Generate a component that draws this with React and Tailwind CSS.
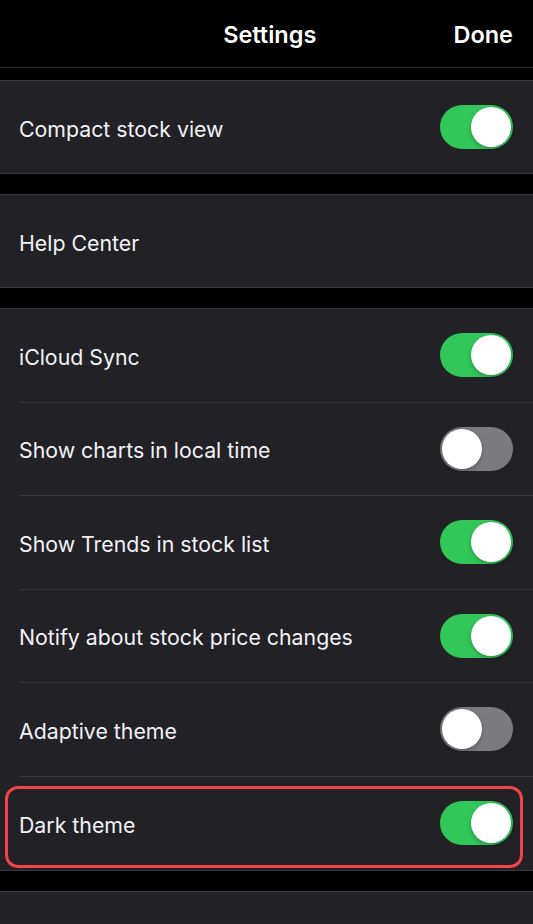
import { useState } from "react";

function Toggle({ on }) {
  return (
    <div
      className={`w-[73px] h-[44px] rounded-full p-[2px] flex items-center ${
        on ? "bg-[#32c759] justify-end" : "bg-[#7a7a7f] justify-start"
      }`}
    >
      <div className="w-[40px] h-[40px] rounded-full bg-white shadow-[0_2px_4px_rgba(0,0,0,0.25)]"></div>
    </div>
  );
}

function Row({ label, toggle, on, last, highlight, single }) {
  return (
    <div
      className={`relative pl-[19px] flex flex-col ${
        single ? "h-[92px]" : "h-[93.5px]"
      }`}
    >
      <div className="flex-1 flex items-center justify-between pr-[20px]">
        <span className="text-[21.3px] text-[#f2f2f7] pt-[5px]">{label}</span>
        {toggle && <Toggle on={on} />}
      </div>
      {!last && <div className="h-px bg-[#38383c]"></div>}
      {highlight && (
        <div className="absolute left-[5px] right-[10px] top-[9px] bottom-[2px] border-[3px] border-[#f2444b] rounded-[13px]"></div>
      )}
    </div>
  );
}

function Group({ children }) {
  return (
    <div className="bg-[#212126] border-y border-[#38383c]">{children}</div>
  );
}

export default function App() {
  const [items] = useState([
    { label: "iCloud Sync", on: true },
    { label: "Show charts in local time", on: false },
    { label: "Show Trends in stock list", on: true },
    { label: "Notify about stock price changes", on: true },
    { label: "Adaptive theme", on: false },
    { label: "Dark theme", on: true, highlight: true },
  ]);

  return (
    <div className="w-[533px] h-[924px] bg-black overflow-hidden font-['Inter','Noto_Sans',sans-serif]">
      <div className="h-[68px] flex items-center justify-between px-[20px] border-b border-[#2a2a2d]">
        <span className="w-[60px]"></span>
        <span className="text-[23.5px] font-semibold text-white pl-[6px] pt-[3px]">Settings</span>
        <span className="text-[23.5px] font-semibold text-white pt-[3px]">Done</span>
      </div>
      <div className="h-[12px]"></div>
      <Group>
        <Row label="Compact stock view" toggle on last single />
      </Group>
      <div className="h-[20px]"></div>
      <Group>
        <Row label="Help Center" last single />
      </Group>
      <div className="h-[20px]"></div>
      <Group>
        {items.map((it, i) => (
          <Row
            key={it.label}
            label={it.label}
            toggle
            on={it.on}
            highlight={it.highlight}
            last={i === items.length - 1}
          />
        ))}
      </Group>
      <div className="h-[20px]"></div>
      <Group>
        <div className="h-[60px]"></div>
      </Group>
    </div>
  );
}
